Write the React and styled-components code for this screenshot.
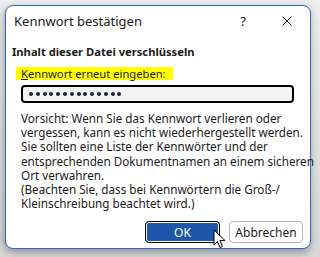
import React from 'react';
import styled, { createGlobalStyle } from 'styled-components';

const GlobalStyle = createGlobalStyle`
  html, body {
    margin: 0;
    padding: 0;
    background: #e4e4e4;
  }
  body {
    font-family: "Noto Sans", "Open Sans", sans-serif;
    font-size: 12px;
    color: #1a1a1a;
  }
`;

const Page = styled.div`
  width: 320px;
  height: 257px;
  padding: 5px 0 0 5px;
  box-sizing: border-box;
  background: linear-gradient(#eeeeee, #d8d8d8);
`;

const Dialog = styled.div`
  position: relative;
  width: 306px;
  height: 244px;
  box-sizing: border-box;
  border: 1px solid #2b68c8;
  border-radius: 8px;
  background: #fff;
  box-shadow: -1px 3px 8px rgba(0, 0, 0, 0.35);
  display: flex;
  flex-direction: column;
`;

const TitleBar = styled.div`
  height: 30px;
  display: flex;
  align-items: center;
  padding-left: 8px;
`;

const Title = styled.span`
  flex: 1;
  font-size: 13px;
`;

const Help = styled.span`
  font-size: 13px;
  margin-right: 36px;
`;

const Close = styled.svg`
  margin-right: 18px;
`;

const Heading = styled.div`
  margin: 8px 0 0 6px;
  font-weight: bold;
  font-size: 11.2px;
  line-height: 16px;
`;

const LabelRow = styled.div`
  margin: 7px 0 0 10px;
  display: flex;
`;

const Label = styled.span`
  display: inline-block;
  background: #ffff00;
  font-size: 11.2px;
  line-height: 13px;
  height: 13px;
  padding: 0 7px 0 5px;
  u { text-decoration: underline; text-underline-offset: 1px; }
`;

const PasswordBox = styled.div`
  margin: 5px 0 0 15px;
  width: 273px;
  height: 18px;
  box-sizing: border-box;
  border: 2px solid #000;
  border-radius: 4px;
  background: #f3f3f3;
  display: flex;
  align-items: center;
  padding-left: 6px;
  gap: 2.8px;
`;

const Dot = styled.span`
  width: 4px;
  height: 4px;
  border-radius: 50%;
  background: #1b2740;
`;

const Notice = styled.div`
  margin: 8px 0 0 15px;
  font-size: 11.7px;
  line-height: 14.2px;
  white-space: nowrap;
`;

const Buttons = styled.div`
  margin-top: auto;
  margin-bottom: 5px;
  display: flex;
  justify-content: flex-end;
  gap: 9px;
  padding-right: 7px;
`;

const Button = styled.button`
  width: ${p => p.w}px;
  height: 22px;
  box-sizing: border-box;
  border-radius: 4px;
  font-family: inherit;
  font-size: 12px;
  padding: 0;
  border: 1px solid ${p => (p.primary ? '#000' : '#b5b5b5')};
  background: ${p => (p.primary ? '#1c57a9' : '#fff')};
  color: ${p => (p.primary ? '#fff' : '#1a1a1a')};
  box-shadow: ${p => (p.primary ? 'inset 0 0 0 1px #fff' : 'none')};
`;

const Pointer = styled.svg`
  position: absolute;
  left: 207px;
  top: 223px;
`;

export default function App() {
  return (
    <>
      <GlobalStyle />
      <Page>
        <Dialog>
          <TitleBar>
            <Title>Kennwort bestätigen</Title>
            <Help>?</Help>
            <Close width="10" height="10" viewBox="0 0 10 10">
              <path d="M0.5 0.5 L9.5 9.5 M9.5 0.5 L0.5 9.5" stroke="#1a1a1a" strokeWidth="1" />
            </Close>
          </TitleBar>
          <Heading>Inhalt dieser Datei verschlüsseln</Heading>
          <LabelRow>
            <Label><u>K</u>ennwort erneut eingeben:</Label>
          </LabelRow>
          <PasswordBox>
            {Array.from({ length: 14 }).map((_, i) => <Dot key={i} />)}
          </PasswordBox>
          <Notice>
            Vorsicht: Wenn Sie das Kennwort verlieren oder<br />
            vergessen, kann es nicht wiederhergestellt werden.<br />
            Sie sollten eine Liste der Kennwörter und der<br />
            entsprechenden Dokumentnamen an einem sicheren<br />
            Ort verwahren.<br />
            (Beachten Sie, dass bei Kennwörtern die Groß-/<br />
            Kleinschreibung beachtet wird.)
          </Notice>
          <Buttons>
            <Button primary w={75}>OK</Button>
            <Button w={74}>Abbrechen</Button>
          </Buttons>
          <Pointer width="13" height="20" viewBox="0 0 13 20">
            <path d="M1 1 L1 16 L4.5 12.5 L7 18.5 L9.5 17.5 L7 11.5 L12 11.5 Z" fill="#fff" stroke="#000" strokeWidth="1" strokeLinejoin="round" />
          </Pointer>
        </Dialog>
      </Page>
    </>
  );
}
